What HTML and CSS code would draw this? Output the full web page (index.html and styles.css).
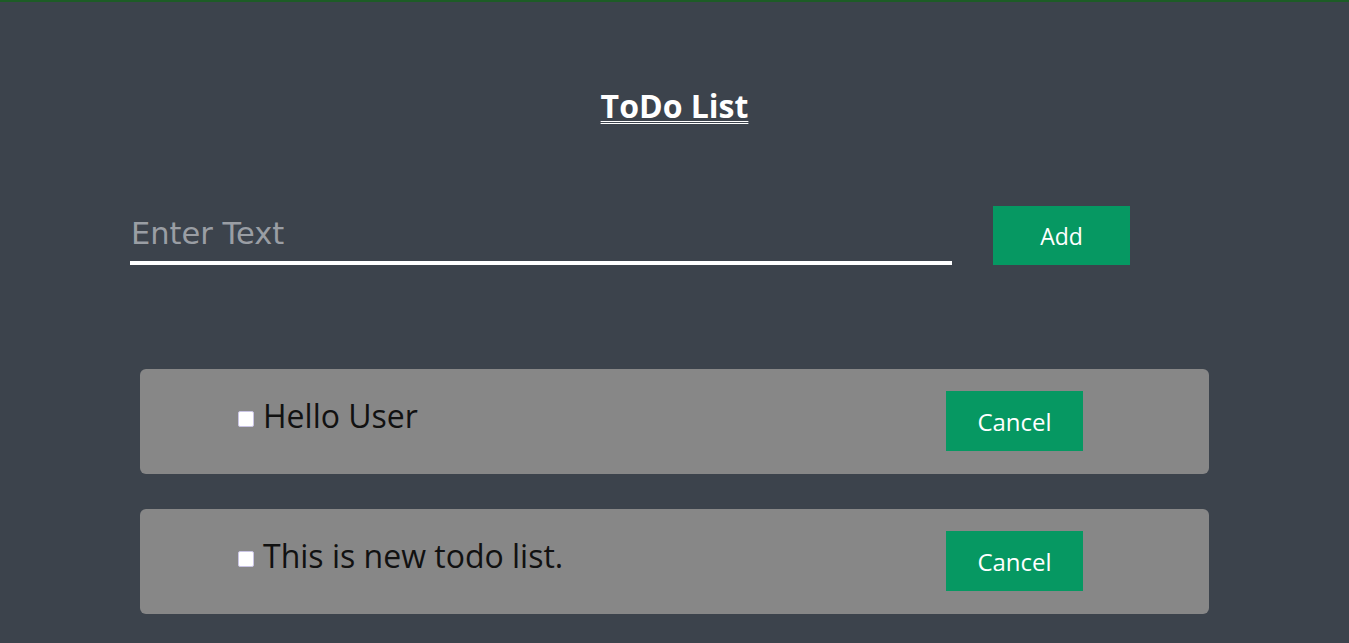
FILE: index.html
```html
<!DOCTYPE html>
<html>
<head>
<meta charset="utf-8">
<link rel="stylesheet" href="styles.css">
</head>
<body>
<div class="app">
  <h1 class="title">ToDo List</h1>
  <div class="main">
    <div class="entry">
      <input class="field" type="text" placeholder="Enter Text">
      <button class="btn add">Add</button>
    </div>
    <ul class="list">
      <li class="item">
        <label class="item-label"><span class="check"></span>Hello User</label>
        <button class="btn cancel">Cancel</button>
      </li>
      <li class="item">
        <label class="item-label"><span class="check"></span>This is new todo list.</label>
        <button class="btn cancel">Cancel</button>
      </li>
    </ul>
  </div>
</div>
</body>
</html>
```
FILE: styles.css
```css
* { box-sizing: border-box; }
html, body { margin: 0; height: 100%; }
body {
  background: #3c434c;
  border-top: 2px solid #1d5c26;
  font-family: "Open Sans", "Liberation Sans", sans-serif;
}
.app { padding-top: 84px; }
.title {
  margin: 0;
  text-align: center;
  color: #ffffff;
  font-size: 32px;
  font-weight: 700;
  line-height: 40px;
  text-decoration: underline double;
  text-decoration-thickness: 1px;
  text-underline-offset: 3px;
}
.main {
  width: 1069px;
  margin: 0 auto;
}
.entry {
  display: flex;
  align-items: flex-end;
  margin: 80px 0 0 -10px;
}
.field {
  width: 822px;
  height: 59px;
  border: none;
  border-bottom: 4px solid #ffffff;
  background: transparent;
  outline: none;
  padding: 0 2px 0 1px;
  font-family: "DejaVu Sans", sans-serif;
  font-size: 30.5px;
  color: #ffffff;
}
.field::placeholder { color: #9a9ea4; }
.btn {
  border: none;
  background: #069862;
  color: #ffffff;
  font-family: "Open Sans", sans-serif;
  font-size: 24px;
  width: 137px;
  height: 60px;
  padding: 0;
}
.add { margin-left: 41px; height: 59px; font-size: 23px; }
.list {
  list-style: none;
  margin: 104px 0 0;
  padding: 0;
  display: flex;
  flex-direction: column;
  gap: 35px;
}
.item {
  display: flex;
  align-items: flex-start;
  justify-content: space-between;
  height: 105px;
  background: #878787;
  border-radius: 6px;
  padding: 22px 126px 0 98px;
}
.item-label {
  display: flex;
  align-items: center;
  font-size: 32px;
  color: #111111;
  line-height: 50px;
}
.check {
  width: 16px;
  height: 16px;
  background: #ffffff;
  border: 1px solid #c9c4e4;
  border-radius: 2px;
  margin: 6px 9px 0 0;
}
```
